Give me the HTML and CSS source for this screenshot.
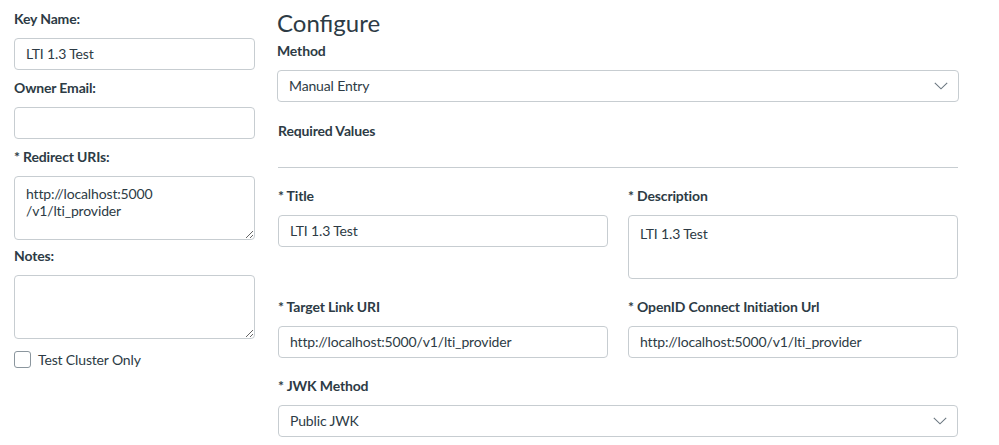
FILE: index.html
```html
<!DOCTYPE html>
<html lang="en">
<head>
<meta charset="utf-8">
<title>Configure</title>
<link rel="stylesheet" href="styles.css">
</head>
<body>
<div class="page">
  <div class="left">
    <div class="field">
      <label class="lbl">Key Name:</label>
      <input class="inp" type="text" value="LTI 1.3 Test">
    </div>
    <div class="field">
      <label class="lbl">Owner Email:</label>
      <input class="inp" type="text" value="">
    </div>
    <div class="field field-ta">
      <label class="lbl">* Redirect URIs:</label>
      <textarea class="ta ta-left">http://localhost:5000
/v1/lti_provider</textarea>
    </div>
    <div class="field field-ta">
      <label class="lbl">Notes:</label>
      <textarea class="ta ta-left"></textarea>
    </div>
    <label class="check">
      <input class="cb" type="checkbox">
      <span>Test Cluster Only</span>
    </label>
  </div>

  <div class="right">
    <h2 class="title">Configure</h2>
    <label class="lbl">Method</label>
    <div class="select select-method">
      <span>Manual Entry</span>
      <svg class="chev" width="14" height="8" viewBox="0 0 14 8"><polyline points="0.8,0.8 7,6.8 13.2,0.8" fill="none" stroke="#6b7780" stroke-width="1.1"/></svg>
    </div>
    <div class="section">Required Values</div>
    <div class="divider"></div>
    <div class="grid">
      <div class="gfield">
        <label class="lbl">* Title</label>
        <input class="inp" type="text" value="LTI 1.3 Test">
      </div>
      <div class="gfield">
        <label class="lbl">* Description</label>
        <textarea class="ta ta-right">LTI 1.3 Test</textarea>
      </div>
      <div class="gfield">
        <label class="lbl">* Target Link URI</label>
        <input class="inp" type="text" value="http://localhost:5000/v1/lti_provider">
      </div>
      <div class="gfield">
        <label class="lbl">* OpenID Connect Initiation Url</label>
        <input class="inp" type="text" value="http://localhost:5000/v1/lti_provider">
      </div>
      <div class="gfield gfull">
        <label class="lbl">* JWK Method</label>
        <div class="select">
          <span>Public JWK</span>
          <svg class="chev" width="14" height="8" viewBox="0 0 14 8"><polyline points="0.8,0.8 7,6.8 13.2,0.8" fill="none" stroke="#6b7780" stroke-width="1.1"/></svg>
        </div>
      </div>
    </div>
  </div>
</div>
</body>
</html>
```

FILE: styles.css
```css
html, body {
  margin: 0;
  padding: 0;
  background: #ffffff;
}

body {
  font-family: Lato, "Open Sans", "Liberation Sans", sans-serif;
  font-size: 14px;
  letter-spacing: -0.15px;
  color: #2d3b45;
}

.page {
  display: flex;
  gap: 22px;
  padding: 9px 0 0 14px;
}

.left {
  width: 241px;
  flex: none;
}

.right {
  width: 682px;
  flex: none;
}

.lbl {
  display: block;
  font-weight: 700;
  line-height: 20px;
  margin-bottom: 9px;
  color: #2d3b45;
}

.field {
  margin-bottom: 8px;
}

.field-ta {
  margin-bottom: 6px;
}

.inp {
  display: block;
  box-sizing: border-box;
  width: 100%;
  height: 32px;
  margin: 0;
  padding: 0 11px 1px 11px;
  border: 1px solid #c7cdd1;
  border-radius: 4px;
  background: #fff;
  font-family: inherit;
  font-size: 14px;
  letter-spacing: -0.15px;
  color: #2d3b45;
  outline: none;
}

.ta {
  display: block;
  box-sizing: border-box;
  width: 100%;
  height: 64px;
  margin: 0;
  border: 1px solid #c7cdd1;
  border-radius: 4px;
  background: #fff;
  font-family: inherit;
  font-size: 14px;
  letter-spacing: -0.15px;
  line-height: 17px;
  color: #2d3b45;
  outline: none;
}

.ta-left {
  padding: 8px 11px;
}

.ta-right {
  padding: 9px 11px;
  resize: none;
}

.check {
  display: flex;
  align-items: center;
  gap: 7px;
  margin-top: 12px;
  line-height: 16px;
}

.cb {
  -webkit-appearance: none;
  appearance: none;
  box-sizing: border-box;
  width: 17px;
  height: 17px;
  margin: 0;
  border: 1px solid #8b969e;
  border-radius: 3px;
  background: #fff;
}

.title {
  margin: 0 0 4px 0;
  font-size: 24px;
  line-height: 27px;
  padding-bottom: 1px;
  font-weight: 400;
  letter-spacing: 0;
  color: #2d3b45;
}

.select {
  box-sizing: border-box;
  height: 32px;
  display: flex;
  align-items: center;
  justify-content: space-between;
  padding: 0 10px 1px 11px;
  border: 1px solid #c7cdd1;
  border-radius: 4px;
  background: #fff;
  color: #2d3b45;
}

.select-method {
  margin-bottom: 19px;
}

.chev {
  display: block;
}

.section {
  font-weight: 700;
  line-height: 20px;
  margin: 0 1px;
}

.divider {
  height: 1px;
  background: #c7cdd1;
  margin: 26px 1px 18px 1px;
}

.grid {
  display: grid;
  grid-template-columns: 1fr 1fr;
  column-gap: 20px;
  row-gap: 18px;
  padding: 0 1px;
  align-items: start;
}

.gfull {
  grid-column: 1 / -1;
}
```
